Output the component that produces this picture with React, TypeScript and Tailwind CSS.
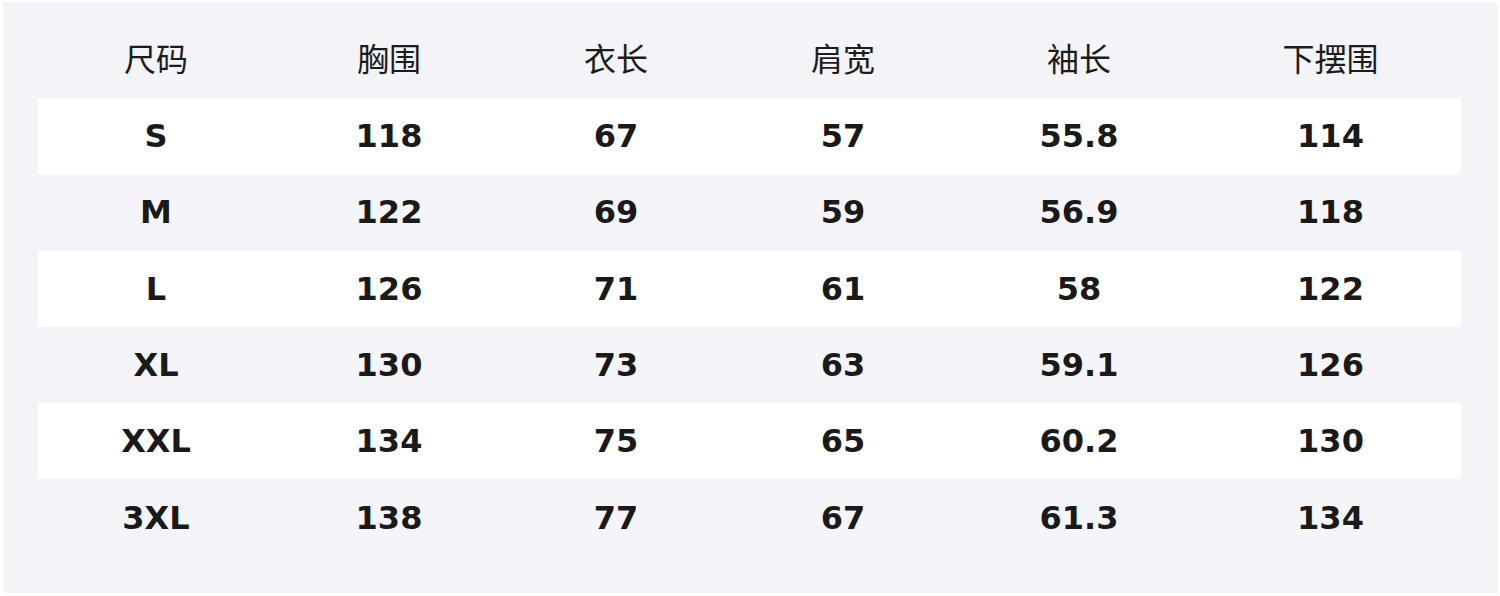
import React from 'react'

const headers = ['尺码', '胸围', '衣长', '肩宽', '袖长', '下摆围']

const rows = [
  ['S', '118', '67', '57', '55.8', '114'],
  ['M', '122', '69', '59', '56.9', '118'],
  ['L', '126', '71', '61', '58', '122'],
  ['XL', '130', '73', '63', '59.1', '126'],
  ['XXL', '134', '75', '65', '60.2', '130'],
  ['3XL', '138', '77', '67', '61.3', '134'],
]

// column widths read off the screenshot (auto table layout)
const cols = 'grid grid-cols-[236px_230px_224px_230px_242px_261px]'

export default function App() {
  return (
    <div className="w-[1500px] h-[596px] bg-white pt-[2px] pl-[3px] pr-[2px] pb-[3px]">
      <div className="h-full bg-[#f3f3f8] pt-[20px] pl-[35px] pr-[37px]">
        {/* Header */}
        <div
          className={`${cols} h-[76px] items-center pb-[6px] text-[32px] text-[#1c1c1c]`}
          style={{ fontFamily: '"Noto Sans CJK SC", "Noto Sans", sans-serif' }}
        >
          {headers.map((h) => (
            <div key={h} className="text-center leading-none">
              {h}
            </div>
          ))}
        </div>

        {/* Body */}
        {rows.map((r, i) => (
          <div
            key={r[0]}
            className={`${cols} h-[76.3px] items-center rounded-[3px] text-[32px] font-bold text-[#1a1a1a] ${
              i % 2 === 0 ? 'bg-white' : 'bg-[#f4f4f9]'
            }`}
            style={{ fontFamily: '"DejaVu Sans", sans-serif' }}
          >
            {r.map((c, j) => (
              <div key={j} className="text-center leading-none">
                {c}
              </div>
            ))}
          </div>
        ))}
      </div>
    </div>
  )
}
